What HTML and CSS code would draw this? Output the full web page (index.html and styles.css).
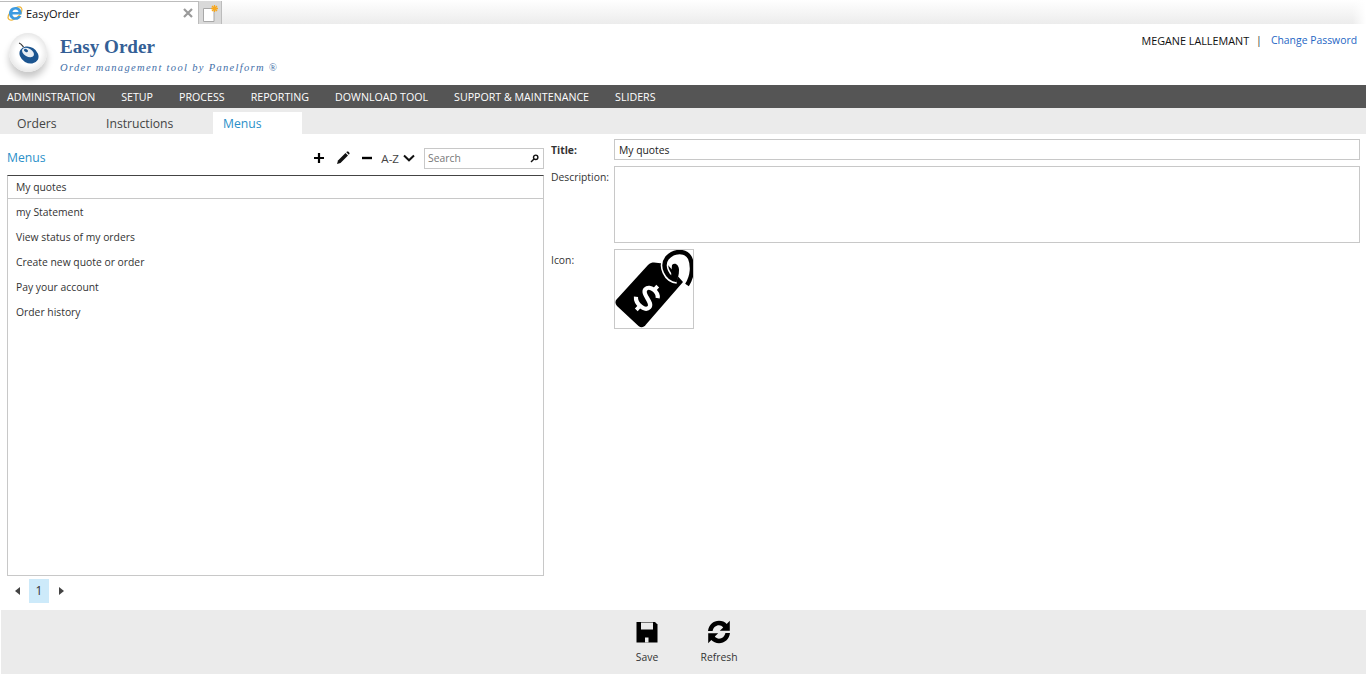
FILE: index.html
```html
<!DOCTYPE html>
<html lang="en">
  <head>
    <meta charset="UTF-8" />
    <title>EasyOrder</title>
    <link rel="stylesheet" href="styles.css">
  </head>
  <body>
    <div class="browser-bar">
      <div class="browser-tab">
        <svg class="ie-icon" width="18" height="18" viewBox="0 0 18 18">
          <ellipse cx="9" cy="9.500" rx="8.500" ry="4.300" transform="rotate(-42 9 9.500)" fill="none" stroke="#efb73e" stroke-width="1.300" />
          <path d="M9.500 3C5.800 3 3 5.800 3 9.400S5.800 15.800 9.500 15.800c2.800 0 5-1.500 5.900-3.900h-3.200c-.6.9-1.500 1.400-2.700 1.400-1.700 0-3-1.200-3.100-2.900h9.200c.1-.3.1-.7.1-1C15.700 5.500 13 3 9.500 3zM6.500 8c.2-1.500 1.400-2.500 3-2.500S12.300 6.500 12.500 8z" fill="#3d9be0" />
        </svg>
        <span class="browser-tab-title">EasyOrder</span>
        <svg class="tab-close" width="10" height="10" viewBox="0 0 10 10">
          <path d="M1 1L9 9M9 1L1 9" stroke="#9a9a9a" stroke-width="2.200" />
        </svg>
      </div>
      <div class="new-tab">
        <svg width="17" height="18" viewBox="0 0 17 18">
          <path d="M1.500 4.500H12V17.500H1.500z" fill="#fff" stroke="#a8a8a8" />
          <path d="M12.500 1V8M9 4.500H16M10 2L15 7M15 2L10 7" stroke="#f7a81f" stroke-width="1.300" />
        </svg>
      </div>
    </div>

    <header class="app-header">
      <div class="brand">
        <div class="logo">
          <svg width="26" height="26" viewBox="0 0 26 26">
            <path d="M4 3C6 3.500 7 5 8.500 7" fill="none" stroke="#333" stroke-width="1.200" />
            <ellipse cx="14" cy="15" rx="10" ry="8" transform="rotate(30 14 15)" fill="#1c5590" />
            <ellipse cx="13" cy="12.500" rx="6.500" ry="4" transform="rotate(30 13 12.500)" fill="#e8eef4" />
            <ellipse cx="11" cy="10.500" rx="2.200" ry="1.400" transform="rotate(30 11 10.500)" fill="#1c5590" />
          </svg>
        </div>
        <div class="brand-text">
          <div class="brand-name">Easy Order</div>
          <div class="brand-sub">Order management tool by Panelform ®</div>
        </div>
      </div>
      <div class="user-info">
        <span class="user-name">MEGANE LALLEMANT</span>
        <span class="user-sep">|</span>
        <a class="user-link" href="#">Change Password</a>
      </div>
    </header>

    <nav class="main-nav">
      <a href="#">ADMINISTRATION</a>
      <a href="#">SETUP</a>
      <a href="#">PROCESS</a>
      <a href="#">REPORTING</a>
      <a href="#">DOWNLOAD TOOL</a>
      <a href="#">SUPPORT &amp; MAINTENANCE</a>
      <a href="#">SLIDERS</a>
    </nav>

    <div class="sub-tabs">
      <a class="sub-tab tab-orders" href="#">Orders</a>
      <a class="sub-tab tab-instructions" href="#">Instructions</a>
      <a class="sub-tab tab-menus active" href="#">Menus</a>
    </div>

    <main class="content">
      <section class="list-panel">
        <div class="list-toolbar">
          <span class="list-title">Menus</span>
          <div class="tools">
            <svg width="12" height="12" viewBox="0 0 12 12"><path d="M6 1V11M1 6H11" stroke="#000" stroke-width="2.200" /></svg>
            <svg class="tool-edit" width="14" height="14" viewBox="0 0 14 14">
              <path d="M1 13L2 9.500L9.500 2L12 4.500L4.500 12z" fill="#111" />
              <path d="M10.300 1.200L11 .6C11.400.3 11.800.3 12.200.6L13.400 1.800C13.700 2.200 13.700 2.600 13.400 3L12.800 3.700z" fill="#111" />
            </svg>
            <svg class="tool-minus" width="12" height="12" viewBox="0 0 12 12"><path d="M1 6H11" stroke="#000" stroke-width="2.400" /></svg>
            <span class="sort-label">A-Z</span>
            <svg class="sort-arrow" width="12" height="8" viewBox="0 0 12 8"><path d="M1 1.500L6 6.300L11 1.500" fill="none" stroke="#111" stroke-width="2" /></svg>
          </div>
          <div class="search-box">
            <span class="search-text">Search</span>
            <svg width="9" height="9" viewBox="0 0 9 9">
              <circle cx="5.700" cy="3.300" r="2.200" fill="none" stroke="#111" stroke-width="1.400" />
              <path d="M4 5L1 8" stroke="#111" stroke-width="1.500" />
            </svg>
          </div>
        </div>
        <ul class="menu-list">
          <li class="selected">My quotes</li>
          <li>my Statement</li>
          <li>View status of my orders</li>
          <li>Create new quote or order</li>
          <li>Pay your account</li>
          <li>Order history</li>
        </ul>
        <div class="pager">
          <span class="arrow arrow-left"></span>
          <span class="page current">1</span>
          <span class="arrow arrow-right"></span>
        </div>
      </section>

      <section class="detail-panel">
        <div class="field field-title">
          <label class="strong">Title:</label>
          <div class="input">My quotes</div>
        </div>
        <div class="field field-desc">
          <label>Description:</label>
          <div class="input textarea"></div>
        </div>
        <div class="field field-icon">
          <label>Icon:</label>
          <div class="icon-box">
            <svg width="78" height="78" viewBox="0 0 78 78">
              <path d="M33 15C35 13 37 12.500 39 12.500L52 14L68 32L31 74.500C29 77.500 26 78 23.500 76L2 56C0 54 0 51 1.500 49.500z" fill="#000" />
              <path d="M62 30C52 29 46 16 52 8C59 0 71 0 75 8C78 15 78 26 72 35" fill="none" stroke="#fff" stroke-width="7.500" />
              <path d="M57 15C60 12 64 15 64 20C64 25 63 28 61 30L56 27z" fill="#000" />
              <path d="M62 30C52 29 46 16 52 8C59 0 71 0 75 8C78 15 78 26 72 35" fill="none" stroke="#000" stroke-width="4.400" />
              <g transform="translate(32 48) rotate(42)" fill="none" stroke="#fff">
                <path d="M8 -7C5 -12 -7 -12 -7 -5.500C-7 1 8 -1 8 5.500C8 12 -5 12 -9 6.500" stroke-width="4.200" />
                <path d="M0 -16V-10M0 10V16" stroke-width="3.800" />
              </g>
            </svg>
          </div>
        </div>
      </section>
    </main>

    <footer class="actions">
      <div class="action action-save">
        <svg width="24" height="24" viewBox="0 0 24 24">
          <path d="M1.500 2H20L22.500 4.500V22.500H1.500z" fill="#000" />
          <path d="M6 2.500H18V9.500H6z" fill="#ebebeb" />
          <path d="M10 17.500H13.500V22.500H10z" fill="#ebebeb" />
        </svg>
        <span>Save</span>
      </div>
      <div class="action action-refresh">
        <svg width="24" height="24" viewBox="0 0 24 24">
          <path d="M1 11C1.800 4.800 6.400 .8 12 .8C15.200 .8 17.800 2 19.700 4L22.800 .8V10.800H12.800L16.200 7.400C15 6.100 13.600 5.300 12 5.300C8.800 5.300 6.400 7.500 5.600 11z" fill="#000" />
          <path d="M23 13C22.200 19.200 17.600 23.200 12 23.200C8.800 23.200 6.200 22 4.300 20L1.200 23.200V13.200H11.200L7.800 16.600C9 17.900 10.400 18.700 12 18.700C15.200 18.700 17.600 16.500 18.400 13z" fill="#000" />
        </svg>
        <span>Refresh</span>
      </div>
    </footer>
  </body>
</html>
```

FILE: styles.css
```css
* {
  padding: 0;
  margin: 0;
  box-sizing: border-box;
}

html,
body {
  height: 100%;
}

body {
  display: flex;
  flex-direction: column;
  height: 674px;
  overflow: hidden;
  background-color: #fff;
  font-family: "Open Sans", "Noto Sans", sans-serif;
  font-size: 10.35px;
  color: #333;
}

a {
  text-decoration: none;
  color: inherit;
}

.browser-bar {
  display: flex;
  height: 24px;
  padding-top: 1px;
  background:
    linear-gradient(to right, rgba(255, 255, 255, 0) 99%, #fff 100%),
    linear-gradient(to bottom, #fff 0%, #ececec 100%);
}

.browser-tab {
  display: flex;
  align-items: center;
  width: 199px;
  padding: 0 5px 0 6px;
  background-color: #fff;
  border: 1px solid #bcbcbc;
  border-bottom: none;
  border-left: none;
}

.browser-tab-title {
  flex: 1;
  margin-left: 2px;
  font-size: 11px;
  color: #111;
}

.new-tab {
  display: flex;
  align-items: center;
  justify-content: center;
  width: 23px;
  background-color: #d9d9d9;
  border-right: 1px solid #bcbcbc;
}

.app-header {
  display: flex;
  justify-content: space-between;
  height: 61px;
}

.brand {
  display: flex;
  padding-left: 9px;
}

.logo {
  display: flex;
  align-items: center;
  justify-content: center;
  width: 38px;
  height: 39px;
  margin-top: 9px;
  border-radius: 50%;
  background: radial-gradient(circle at 50% 50%, #fff 45%, #cfcfcf 100%);
  box-shadow: 0 6px 7px rgba(0, 0, 0, 0.22);
}

.brand-text {
  margin-left: 13px;
}

.brand-name {
  margin-top: 11px;
  font-family: "Liberation Serif", serif;
  font-size: 19.1px;
  font-weight: bold;
  line-height: 23px;
  color: #345f96;
}

.brand-sub {
  margin-top: 4px;
  font-family: "Liberation Serif", serif;
  font-size: 10.5px;
  font-style: italic;
  letter-spacing: 1.32px;
  color: #3f6fa8;
}

.user-info {
  display: flex;
  gap: 9px;
  padding: 9px 9px 0 0;
  font-size: 10.6px;
  line-height: 15px;
}

.user-name {
  font-size: 10.8px;
  color: #111;
}

.user-sep {
  margin-left: -2px;
}

.user-link {
  font-size: 10.4px;
  color: #2566c4;
}

.main-nav {
  display: flex;
  gap: 26px;
  height: 23px;
  padding-left: 7px;
  align-items: center;
  background-color: #555;
  font-size: 10.66px;
  color: #fff;
}

.sub-tabs {
  display: flex;
  height: 26px;
  padding-top: 4px;
  background-color: #ebebeb;
  font-size: 12.2px;
  color: #444;
}

.sub-tab {
  display: block;
  line-height: 24px;
  padding-left: 17px;
}

.tab-orders {
  width: 89px;
}

.tab-instructions {
  width: 124px;
}

.tab-menus {
  width: 89px;
  padding-left: 10px;
}

.sub-tab.active {
  background-color: #fff;
  color: #2a8fc9;
}

.content {
  flex: 1;
  display: flex;
}

.list-panel {
  display: flex;
  flex-direction: column;
  width: 537px;
  margin-left: 7px;
}

.list-toolbar {
  display: flex;
  align-items: center;
  height: 41px;
  padding-top: 7px;
}

.list-title {
  flex: 1;
  margin-top: -2px;
  font-size: 12.2px;
  color: #2a8fc9;
}

.tools {
  display: flex;
  align-items: center;
}

.tool-edit {
  margin-left: 11px;
}

.tool-minus {
  margin-left: 11px;
}

.sort-label {
  margin-left: 8px;
  font-size: 11.6px;
  color: #444;
}

.sort-arrow {
  margin-left: 4px;
}

.search-box {
  display: flex;
  align-items: center;
  justify-content: space-between;
  width: 120px;
  height: 21px;
  margin-left: 9px;
  padding: 0 4px 0 3px;
  border: 1px solid #c8c8c8;
}

.search-text {
  color: #777;
}

.menu-list {
  flex: 1;
  list-style: none;
  border: 1px solid #c8c8c8;
  border-top: 1px solid #444;
}

.menu-list li {
  height: 25px;
  padding-left: 8px;
  line-height: 23px;
}

.menu-list li.selected {
  height: 23px;
  line-height: 22px;
  margin-bottom: 2px;
  border-bottom: 1px solid #c8c8c8;
}

.pager {
  display: flex;
  align-items: center;
  height: 34px;
  padding-bottom: 7px;
  padding-top: 3px;
}

.arrow {
  width: 0;
  height: 0;
  border-top: 4px solid transparent;
  border-bottom: 4px solid transparent;
}

.arrow-left {
  margin-left: 8px;
  border-right: 5px solid #444;
}

.arrow-right {
  margin-left: 10px;
  border-left: 5px solid #444;
}

.page {
  width: 20px;
  height: 24px;
  margin-left: 9px;
  line-height: 24px;
  text-align: center;
  font-size: 12px;
}

.page.current {
  background-color: #cdeafa;
}

.detail-panel {
  flex: 1;
  margin-left: 7px;
  margin-right: 6px;
  padding-top: 5px;
}

.field {
  display: flex;
  margin-bottom: 6px;
}

.field label {
  width: 63px;
  padding-top: 1px;
  line-height: 20px;
}

.field label.strong {
  font-weight: bold;
}

.input {
  flex: 1;
  height: 21px;
  padding: 1px 0 0 4px;
  line-height: 18px;
  color: #222;
  border: 1px solid #c8c8c8;
}

.input.textarea {
  height: 77px;
}

.icon-box {
  width: 80px;
  height: 80px;
  border: 1px solid #c8c8c8;
}

.actions {
  display: flex;
  justify-content: center;
  gap: 36px;
  height: 64px;
  margin-left: 1px;
  padding-top: 10px;
  padding-right: 1px;
  background-color: #ebebeb;
}

.action {
  display: flex;
  flex-direction: column;
  align-items: center;
  gap: 6px;
  width: 36px;
  line-height: 15px;
}
```
